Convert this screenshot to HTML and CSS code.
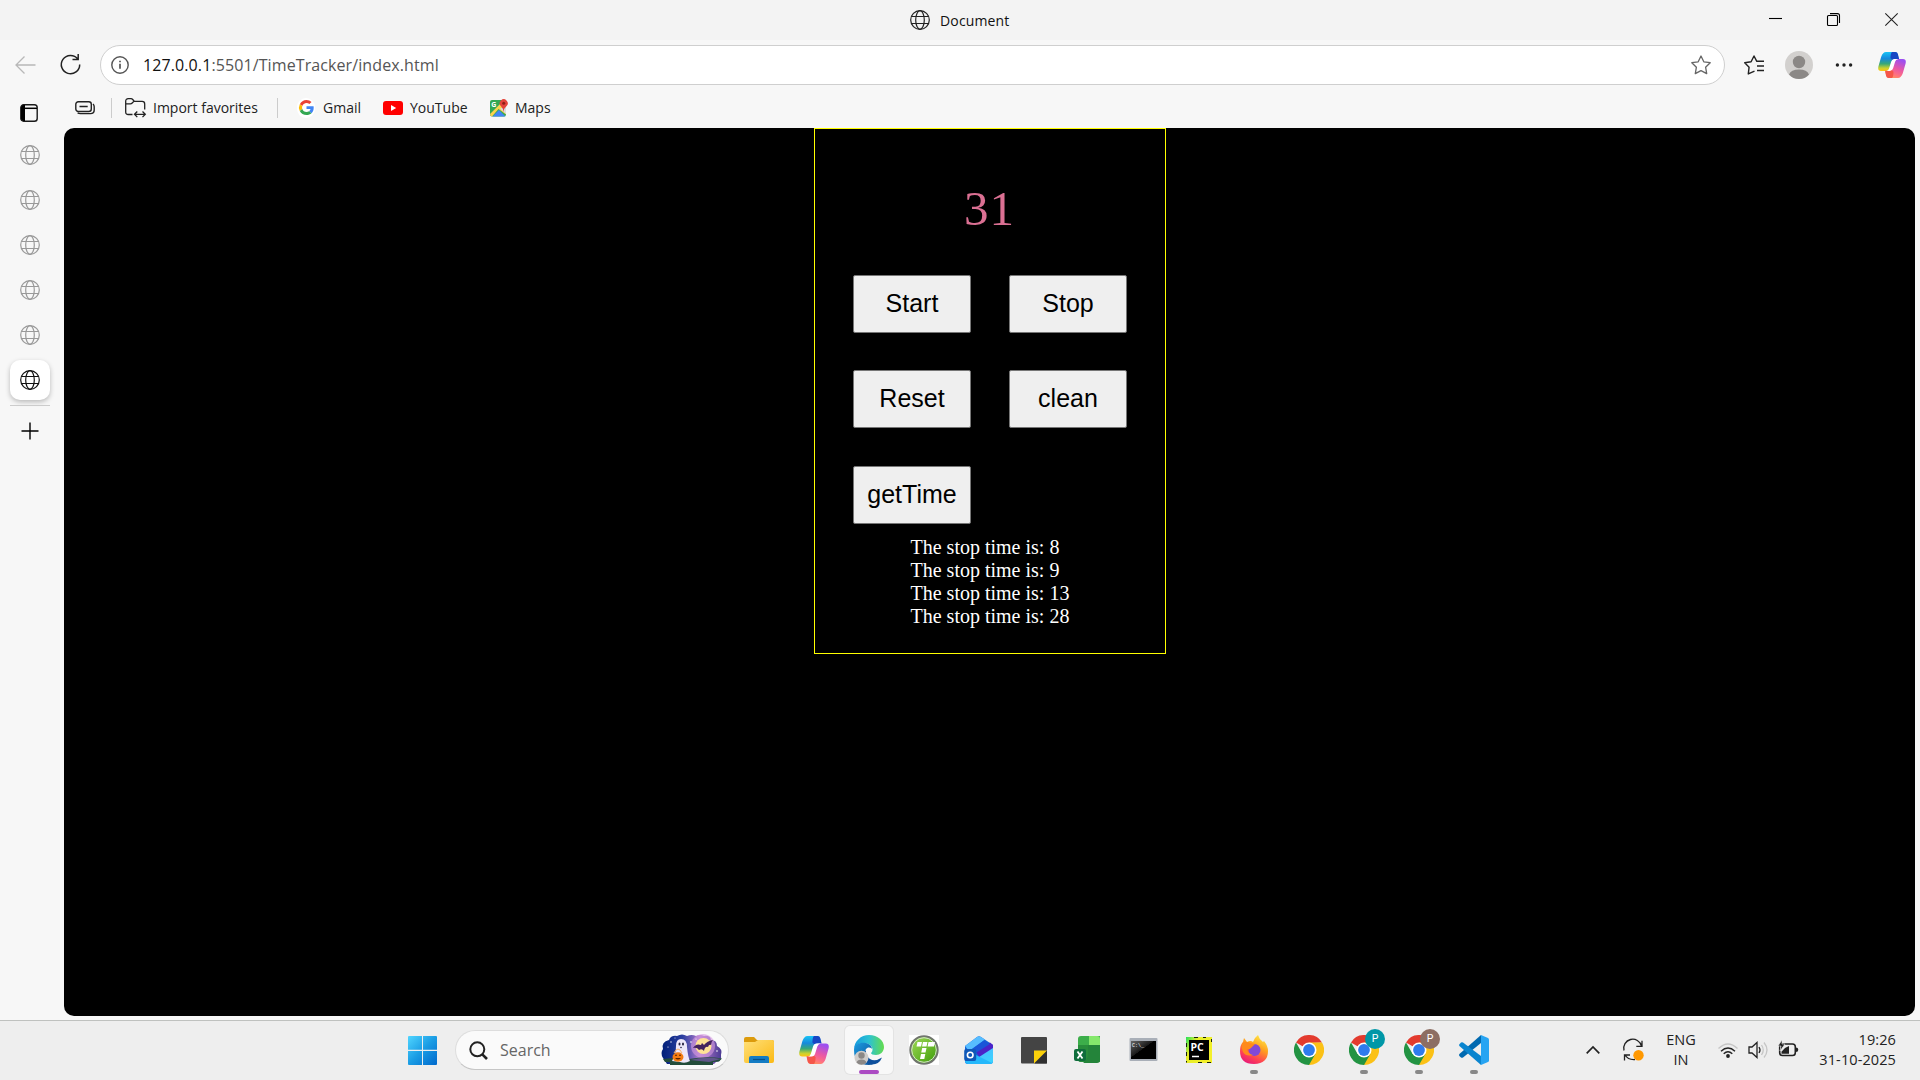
FILE: index.html
```html
<!DOCTYPE html>
<html lang="en">
<head>
<meta charset="utf-8">
<title>Document</title>
<link rel="stylesheet" href="styles.css">
</head>
<body>
<svg class="defs" width="0" height="0">
  <defs>
    <linearGradient id="cpA" x1="0" y1="0" x2="0" y2="1"><stop offset="0" stop-color="#17c3f5"/><stop offset=".35" stop-color="#1689dc"/><stop offset=".62" stop-color="#37a878"/><stop offset=".85" stop-color="#c9d12f"/><stop offset="1" stop-color="#ffc50f"/></linearGradient>
    <linearGradient id="cpB" x1=".6" y1="0" x2=".2" y2="1"><stop offset="0" stop-color="#9d4ff0"/><stop offset=".45" stop-color="#e958a5"/><stop offset=".75" stop-color="#ff7180"/><stop offset="1" stop-color="#ff9a55"/></linearGradient>
    <linearGradient id="win" gradientUnits="userSpaceOnUse" x1="0" y1="0" x2="29" y2="29"><stop offset="0" stop-color="#50d5ff"/><stop offset=".5" stop-color="#1a9ce4"/><stop offset="1" stop-color="#0068cc"/></linearGradient>
    <linearGradient id="fold" x1="0" y1="0" x2="1" y2="1"><stop offset="0" stop-color="#ffe07a"/><stop offset="1" stop-color="#fbb914"/></linearGradient>
    <linearGradient id="edA" x1="0" y1=".5" x2="1" y2=".5"><stop offset="0" stop-color="#159ae0"/><stop offset=".5" stop-color="#2cc2d2"/><stop offset="1" stop-color="#65dc4d"/></linearGradient>
    <linearGradient id="edB" x1="0" y1="0" x2="1" y2="1"><stop offset="0" stop-color="#1b9be0"/><stop offset="1" stop-color="#0b4b94"/></linearGradient>
    <linearGradient id="ffA" x1=".8" y1="0" x2=".3" y2="1"><stop offset="0" stop-color="#fff04a"/><stop offset=".4" stop-color="#ffa01e"/><stop offset=".75" stop-color="#ff4453"/><stop offset="1" stop-color="#e81a78"/></linearGradient>
    <linearGradient id="sky" x1="0" y1="0" x2="1" y2="0"><stop offset="0" stop-color="#001f78"/><stop offset=".35" stop-color="#2b3fa0"/><stop offset=".65" stop-color="#b57bcd"/><stop offset="1" stop-color="#4a3a94"/></linearGradient>
    <linearGradient id="grn" x1="0" y1="0" x2="1" y2="1"><stop offset="0" stop-color="#a4dc58"/><stop offset="1" stop-color="#3a9b08"/></linearGradient>
    <linearGradient id="olk" x1="0" y1="0" x2="1" y2="1"><stop offset="0" stop-color="#55b4ff"/><stop offset="1" stop-color="#38d5ff"/></linearGradient>
    <linearGradient id="cmd" x1="0" y1="0" x2="1" y2="1"><stop offset="0" stop-color="#666"/><stop offset=".45" stop-color="#191919"/><stop offset=".46" stop-color="#000"/></linearGradient>
    <linearGradient id="pyc" x1="0" y1="0" x2="1" y2=".6"><stop offset="0" stop-color="#21e05c"/><stop offset=".35" stop-color="#e5ee28"/><stop offset="1" stop-color="#f4f02a"/></linearGradient>
    <symbol id="globe" viewBox="0 0 20 20"><g fill="none" stroke="currentColor" stroke-width="1.2"><circle cx="10" cy="10" r="9.3"/><ellipse cx="10" cy="10" rx="4.3" ry="9.3"/><path d="M1.3 6.5h17.4M1.3 13.5h17.4"/></g></symbol>
    <symbol id="copilot" viewBox="0 0 28 26">
      <path d="M5.500 .9Q6.300 0 8 0H17q2 0 2.600 2l1 4-6 1.500-3 9Q10.500 19 8 19H3Q-.6 19 .4 14.500L3.200 4.700Q4 2.200 5.500 .9z" fill="url(#cpA)"/>
      <path d="M14 0h3.400q2 0 2.500 2l1.200 5H17q-1.500 0-2.300 1.200L12.500 6Q12.600 1 14 0z" fill="#1746c4"/>
      <path d="M22.500 25.100Q21.700 26 20 26H11q-2 0-2.600-2l-1-4 6-1.500 3-9Q17.500 7 20 7h5q3.600 0 2.600 4.500l-2.800 9.800q-.8 2.500-2.300 3.800z" fill="url(#cpB)"/>
      <path d="M14 26h-3.400q-2 0-2.500-2L7 18.800h4q1.500 0 2.300-1.200l2.200 2.200Q15.400 25 14 26z" fill="#f5564a"/>
      <path d="M16.500 7h3.800q-2.500.4-3.200 2.700l-2 6.600Q14.300 19 11.800 19H8.500q1.900-.3 2.600-2.600l2-6.700Q14 7 16.500 7z" fill="#fff"/>
    </symbol>
    <symbol id="chrome" viewBox="0 0 30 30">
      <path d="M15 15 2 7.500A15 15 0 0 1 28 7.500L15 8z" fill="#e33b2e"/><path d="M15 15V7.500H28A15 15 0 0 1 15 30z" fill="#fbc116"/><path d="M15 30A15 15 0 0 1 2 7.500L8.500 18.700 15 22l6.500-3.300z" fill="#229342"/>
      <circle cx="15" cy="15" r="7.500" fill="#fff"/><circle cx="15" cy="15" r="5.900" fill="#2f7bed"/>
    </symbol>
  </defs>
</svg>

<header class="titlebar">
  <div class="tab-title"><svg width="20" height="20"><use href="#globe"/></svg><span class="t-doc">Document</span></div>
  <div class="window-controls">
    <svg width="13" height="13"><path d="M0 5.500h13" stroke="#000" stroke-width="1.100"/></svg>
    <svg width="13" height="13" fill="none" stroke="#000" stroke-width="1.100"><rect x=".5" y="2.500" width="10" height="10" rx="1"/><path d="M3 .6h7.500q2 0 2 2V10"/></svg>
    <svg width="13" height="13" stroke="#222" stroke-width="1.100"><path d="M.3.3l12.400 12.400M12.700.3.3 12.700"/></svg>
  </div>
</header>

<nav class="toolbar">
  <svg class="back" width="21" height="18" fill="none" stroke="#b8b8b8" stroke-width="1.300"><path d="M20.500 9H1M9.500.5 1 9l8.500 8.500"/></svg>
  <svg class="reload" width="21" height="21" fill="none" stroke="#222" stroke-width="1.500"><path d="M17.800 5A9.200 9.200 0 1 0 19.700 10.500M18.200 0v5.500h-5.700"/></svg>
  <div class="address">
    <svg width="18" height="18" fill="none" stroke="#555" stroke-width="1.400"><circle cx="9" cy="9" r="8.200"/><path d="M9 7.800v5M9 4.700v1.600" stroke-width="1.700"/></svg>
    <span class="t-url"><b>127.0.0.1</b>:5501/TimeTracker/index.html</span>
    <svg class="star" width="20" height="20" fill="none" stroke="#666" stroke-width="1.300" stroke-linejoin="round"><path d="M10 1l2.800 5.800 6.400.9-4.600 4.500 1.100 6.400L10 15.600l-5.700 3 1.100-6.400L.8 7.700l6.400-.9z"/></svg>
  </div>
  <div class="actions">
    <svg width="20" height="20" fill="none" stroke="#222" stroke-width="1.400" stroke-linejoin="round"><path d="M10.500 16.200 4.300 18.900l.8-6.700L.7 7.700l6.400-.9L10 1l2.800 5.300H20M13 11h7M13 15.500h7"/></svg>
    <svg width="28" height="28"><circle cx="14" cy="14" r="14" fill="#d2d0ce"/><circle cx="14" cy="11" r="6.200" fill="#8b8886"/><path d="M4 23.500Q6 18.500 14 18.500t10 5Q20 28 14 28T4 23.500z" fill="#8b8886"/></svg>
    <svg width="18" height="4" fill="#222"><circle cx="2.400" cy="2" r="1.700"/><circle cx="9" cy="2" r="1.700"/><circle cx="15.600" cy="2" r="1.700"/></svg>
    <svg width="28" height="26"><use href="#copilot"/></svg>
  </div>
</nav>

<div class="workspace">
  <aside class="sidebar">
    <svg class="panel-icon" width="18" height="18"><rect x=".8" y=".8" width="16.400" height="16.400" rx="2.800" fill="none" stroke="#1a1a1a" stroke-width="1.400"/><path d="M1 3.500Q1 1 3.500 1H5v16H3.500Q1 17 1 14.500z"/><path d="M1 4.300h16" stroke="#000" stroke-width="1.500"/></svg>
    <div class="tabs">
      <div class="tab"><svg width="20" height="20"><use href="#globe"/></svg></div>
      <div class="tab"><svg width="20" height="20"><use href="#globe"/></svg></div>
      <div class="tab"><svg width="20" height="20"><use href="#globe"/></svg></div>
      <div class="tab"><svg width="20" height="20"><use href="#globe"/></svg></div>
      <div class="tab"><svg width="20" height="20"><use href="#globe"/></svg></div>
      <div class="tab active"><svg width="20" height="20"><use href="#globe"/></svg></div>
    </div>
    <div class="rule"></div>
    <svg class="plus" width="18" height="18" stroke="#000" stroke-width="1.400"><path d="M.5 9h17M9 .5v17"/></svg>
  </aside>

  <div class="main">
    <div class="bookmarks">
      <svg width="20" height="14" fill="none" stroke="#222" stroke-width="1.400"><rect x=".8" y=".8" width="15.500" height="9.700" rx="2.500"/><path d="M4.500 5.500h8.200M18 3q1.200 1 1.200 2.800v3.200q0 3.600-3.800 3.600H5.500Q3.500 12.600 2.600 11.800"/></svg>
      <i class="sep"></i>
      <div class="bm import"><svg width="21" height="20" fill="none" stroke="#222" stroke-width="1.300"><path d="M7.500 16.500H3.300q-2.600 0-2.600-2.600V3.300Q.7.700 3.300.7H6q1 0 1.700.8l1.700 1.900h7.700q2.600 0 2.600 2.600v5.500M.7 5.800h4.600q1.200 0 1.900-.8l1.600-1.600M9.700 16.300h10.400M12.300 13.500l-2.800 2.800 2.800 2.800M17.500 13.500l2.800 2.800-2.800 2.800"/></svg><span>Import favorites</span></div>
      <i class="sep"></i>
      <div class="bm"><span class="chip"><svg width="15" height="15" viewBox="0 0 48 48"><path fill="#ea4335" d="M24 9.500c3.500 0 6.700 1.200 9.200 3.600l6.900-6.900C35.900 2.400 30.500 0 24 0 14.600 0 6.500 5.400 2.600 13.200l8 6.200C12.400 13.700 17.700 9.500 24 9.500z"/><path fill="#4285f4" d="M47 24.600c0-1.600-.2-3.100-.4-4.600H24v9h12.900c-.6 3-2.300 5.500-4.800 7.200l7.700 6C44.400 38 47 32 47 24.600z"/><path fill="#fbbc05" d="M10.500 28.600a14 14 0 0 1 0-9.200l-8-6.200a24 24 0 0 0 0 21.600z"/><path fill="#34a853" d="M24 48c6.500 0 11.900-2.100 15.900-5.800l-7.700-6c-2.200 1.500-4.900 2.300-8.200 2.300-6.300 0-11.600-4.200-13.500-9.900l-8 6.200C6.500 42.600 14.600 48 24 48z"/></svg></span><span>Gmail</span></div>
      <div class="bm yt"><svg width="20" height="14"><rect width="20" height="14" rx="3" fill="#f00"/><path d="M8 4l5.200 3L8 10z" fill="#fff"/></svg><span>YouTube</span></div>
      <div class="bm maps"><svg width="18" height="18"><rect y="1" width="16" height="16.500" rx="2" fill="#34a853"/><path d="M0 15 12 3h4v12.500L8.500 10 2 17.500Q0 17 0 15z" fill="#fbd34b"/><path d="M2.500 17.500 9 11l6.500 6.500z" fill="#4285f4"/><path d="M10 9.500l6 5.500V8z" fill="#d9dde2"/><text x="1.200" y="8" class="mapg">G</text><path d="M13.500 13Q13 9 10.800 7A4 4 0 1 1 16.600 7Q14 9 13.500 13z" fill="#e2443a"/><circle cx="13.700" cy="4.200" r="1.500" fill="#8e1f16"/></svg><span>Maps</span></div>
    </div>

    <main class="page">
      <section class="tracker">
        <div class="count">31</div>
        <div class="buttons">
          <button>Start</button><button>Stop</button><button>Reset</button><button>clean</button><button>getTime</button>
        </div>
        <div class="log"><div>The stop time is: 8</div><div>The stop time is: 9</div><div>The stop time is: 13</div><div>The stop time is: 28</div></div>
      </section>
    </main>
  </div>
</div>

<footer class="taskbar">
  <svg class="start" width="29" height="29" fill="url(#win)"><path d="M1 0h13v13.700H0V1Q0 0 1 0zM15 0h13q1 0 1 1v12.700H15zM0 15h14v14H1q-1 0-1-1zM15 15h14v13q0 1-1 1H15z"/></svg>
  <div class="search">
    <svg width="19" height="19" fill="none" stroke="#222" stroke-width="2"><circle cx="8.300" cy="8.300" r="7"/><path d="M13.300 13.300l4.700 4.700" stroke-width="2.600"/></svg>
    <span class="t-search">Search</span>
    <svg class="scene" width="62" height="32">
      <path d="M2 24Q-1 19 2 15 0 8 8 6q2-5 8-4 5-3 10 0 5-2 9 0 4-2 8 0 6-1 7 4 6 0 6 6 6 3 4 9 1 6-5 7l-2 2H6z" fill="url(#sky)"/>
      <circle cx="42" cy="12" r="12" fill="#d39ae0" opacity=".6"/><circle cx="42.500" cy="12" r="8" fill="#ffe295"/>
      <path d="M2 25Q16 23 28 25q18-3 33-.5l-3 3-6 .5v3H9v-3H4z" fill="#234d3b"/><path d="M29 26q15-4 31-1l-12 3z" fill="#60578a"/>
      <path d="M15 12Q15 5 20 5q6 0 6 8 1 10 3 14-5 3-10 1l-8-1q4-7 4-15z" fill="#eee7fa"/><ellipse cx="18.500" cy="10" rx="1" ry="1.600" fill="#272343"/><ellipse cx="22" cy="10" rx="1" ry="1.600" fill="#272343"/><circle cx="20" cy="13.500" r=".8" fill="#272343"/>
      <path d="M13 19q4-8 8 0" fill="none" stroke="#f8b46b"/><ellipse cx="17" cy="23" rx="5.500" ry="4.700" fill="#f47c13"/><path d="M14 22l1-2 1 2zM18 22l1-2 1 2zM14 24q3 3 6 0z" fill="#5e2500"/>
      <path d="M32 14q3-5 8-3l1-2 2 2q3-4 9-5-2 2-2 5-2-1-3 2-3-1-4 4-2-3-5-1-2-3-6-2z" fill="#43235e"/>
      <g fill="#fff"><circle cx="10" cy="8" r=".7"/><circle cx="7" cy="13" r=".6"/><circle cx="30" cy="8" r=".8"/><circle cx="56" cy="17" r=".8"/><circle cx="14" cy="4" r=".5"/><circle cx="35" cy="5" r=".6"/></g>
    </svg>
  </div>
  <div class="apps">
    <div class="app"><svg width="30" height="30"><path d="M0 4q0-2 2-2h8l3 3h15q2 0 2 2v4H0z" fill="#dc9b0c"/><path d="M0 7h11l3-2h14q2 0 2 2v19q0 2-2 2H2q-2 0-2-2z" fill="url(#fold)"/><path d="M5 28v-5q0-2 2-2h16q2 0 2 2v5z" fill="#147cc4"/><path d="M9 24.500h12" stroke="#07508a" stroke-width="1.200"/></svg></div>
    <div class="app"><svg width="30" height="28"><use href="#copilot"/></svg></div>
    <div class="app current"><svg width="30" height="30"><path d="M0 15C0 6 7 0 15 0c9 0 15 6 15 12 0 5-4 8-8 8-3 0-5-1-5-2 1-1 1.500-2 1.500-3.500C18.500 11 15 8 10 8 5 8 0 11 0 15z" fill="url(#edA)"/><path d="M0 15C0 10 5 7.500 10 7.800c4.500.2 8 3 8 6-4-3-7 0-7 4 0 6 5 10 10 10Q18 30 15 30 0 30 0 15z" fill="url(#edB)"/><path d="M12 15q-1 6 4 9 5 3 12-1.500-3 7.500-11 7-7-2-7-9 0-4 2-5.500z" fill="#0d4f9c"/><circle cx="7.500" cy="22.800" r="7" fill="#cfcdcb"/><circle cx="7.500" cy="20.500" r="3.200" fill="#8b8886"/><path d="M2.500 27.500q1-3 5-3t5 3q-2 2.300-5 2.300t-5-2.300z" fill="#8b8886"/></svg></div>
    <div class="app"><svg width="30" height="30"><rect width="30" height="30" fill="#fff"/><circle cx="15" cy="15" r="13.700" fill="url(#grn)" stroke="#70746e" stroke-width="2"/><circle cx="15" cy="15" r="12.300" fill="none" stroke="#d7e5cb" stroke-width="1"/><g fill="#fff"><path d="M8.500 7H13l-1 4.500H7.500zM14 7h4.500l-1 4.500H13zM19.500 7H26l-1 4.500h-6.500zM13.200 13h4.300l-1 4.500h-4.300zM12 19h4.300l-1 5H11z"/></g></svg></div>
    <div class="app"><svg width="30" height="30"><path d="M1 11 13 2q2-1.500 4 0l12 8v16q0 3-3 3H4q-3 0-3-3z" fill="#1664d8"/><path d="M1 11 13 2q2-1.500 4 0l4 2.500L5 16z" fill="#57bdff"/><path d="M12 17 26 7.500l3 2.500v4L16 23z" fill="#4b23c8"/><path d="M7 15 20 5.500l6 3.500-16 10z" fill="#1a55d8"/><path d="M12 24l17-11v13q0 3-3 3H6z" fill="url(#olk)"/><path d="M12 20l16 8q-1 1-2 1H4q-3 0-3-3z" fill="#25b8fb"/><rect x=".2" y="14" width="12" height="12" rx="2" fill="#0f58b8"/><circle cx="6.200" cy="20" r="2.800" fill="none" stroke="#fff" stroke-width="1.600"/></svg></div>
    <div class="app"><svg width="30" height="30"><rect x="2" y="2" width="26" height="26.500" rx="1" fill="#444"/><path d="M15 15.500h13L15 28.500z" fill="#fbd10a"/><path d="M28 16v12.500H15.500z" fill="#303030"/></svg></div>
    <div class="app"><svg width="30" height="30"><path d="M4 4q0-3 3-3h19v26H7q-3 0-3-3z" fill="#3cae4a"/><path d="M15 1h8q3 0 3 3v6H15z" fill="#85e86c"/><path d="M4 10h11v17H7q-3 0-3-3z" fill="#288d3b"/><path d="M14 10h12v15q0 3-3 3H9q5-3 5-9z" fill="#24843a"/><rect y="14" width="12" height="12" rx="2" fill="#0f6d3c"/><path d="M3.500 16.500l5 7M8.500 16.500l-5 7" stroke="#fff" stroke-width="1.800"/></svg></div>
    <div class="app"><svg width="30" height="30"><rect x=".5" y="3" width="28" height="23" rx="1" fill="#a9afb8"/><rect x="2" y="6" width="25" height="18" fill="url(#cmd)"/><text x="3" y="11.500" class="cmdt">C:\_</text></svg></div>
    <div class="app"><svg width="30" height="30"><rect x="2" y="2" width="26" height="26" fill="url(#pyc)"/><path d="M2.500 8v19.500M10 2.500h12M14 27.500h13.500M27.500 4v3" fill="none" stroke="#17200b" stroke-dasharray="4 5"/><rect x="5" y="5" width="20" height="20" fill="#000"/><text x="6.500" y="15.500" class="pct">PC</text><path d="M8 21.500h7" stroke="#fff" stroke-width="1.500"/></svg></div>
    <div class="app running"><svg width="30" height="30"><path d="M1 16Q1 10 4 7l1-4 3 4q4-2 6 0 1-4 5-7 1 4 5 7l1-1q4 5 4 10 0 12.500-14 13Q1 29 1 16z" fill="url(#ffA)"/><circle cx="15.500" cy="15" r="6" fill="#8149d9"/><path d="M3 8q5-2 8 0l5 1-4 4q-2 2-4 1 1 5 6 6-7 2-10-3Q2 13 3 8z" fill="#ff8a1c"/></svg></div>
    <div class="app"><svg width="30" height="30"><use href="#chrome"/></svg></div>
    <div class="app running"><svg width="30" height="30"><use href="#chrome"/></svg><span class="badge teal">P</span></div>
    <div class="app running"><svg width="30" height="30"><use href="#chrome"/></svg><span class="badge brown">P</span></div>
    <div class="app running"><svg width="30" height="30"><path d="M22 0v8L4 22.500q-1 .5-2 0l-1.600-1.600q-.8-1 0-2z" fill="#0069b0"/><path d="M.4 11Q-.3 10 .4 9.200L2 7.600q1-.6 2 0L22 21v9z" fill="#0a85cf"/><path d="M22 0l7 3q1 .5 1 1.500v21q0 1-1 1.500l-7 3z" fill="#27a4f2"/></svg></div>
  </div>
  <div class="tray">
    <svg class="chev" width="14" height="8" fill="none" stroke="#222" stroke-width="1.700"><path d="M.7 7.300 7 1l6.300 6.300"/></svg>
    <svg class="sync" width="21" height="21" fill="none" stroke="#222" stroke-width="1.300"><path d="M1 10.500A9 9 0 0 1 18.500 6M19 .8v5.500h-5.700M12 19.500Q5 20 2 15M1.500 20.500V15H7"/><circle cx="15.500" cy="15.300" r="5.200" fill="#ff9800" stroke="none"/></svg>
    <div class="lang"><span>ENG</span><span>IN</span></div>
    <svg class="wifi" width="20" height="15" fill="none" stroke="#222" stroke-width="1.400"><path d="M.5 5.500Q10-3.500 19.500 5.500" stroke="#c6c6c6"/><path d="M3 8.200q7-6.500 14 0M5.700 10.800q4.300-4 8.600 0"/><circle cx="10" cy="13" r="1.900" fill="#222" stroke="none"/></svg>
    <svg class="vol" width="21" height="18" fill="none" stroke="#222" stroke-width="1.300"><path d="M1 6h3l5-4.500v15L4 12H1zM11 6q2 3 0 6"/><path d="M13.500 4q3.500 5 0 10M16 1.500q6 7.500 0 15" stroke="#c6c6c6"/></svg>
    <svg class="bat" width="21" height="17"><rect x="1.700" y="4" width="15.600" height="11.500" rx="2.800" fill="none" stroke="#222" stroke-width="1.600"/><path d="M17.800 7.500q2.500 0 2.500 2.300t-2.500 2.300z" fill="#222"/><path d="M3.500 13.800v-2L7 8l4-2v7.800z" fill="#222"/><path d="M4 0 0 6h3l-1 5 5-7H4z" fill="#222" stroke="#eee" stroke-width=".6"/></svg>
    <div class="clock"><span>19:26</span><span>31-10-2025</span></div>
  </div>
</footer>
</body>
</html>
```

FILE: styles.css
```css
* { box-sizing: border-box; }
html, body { height: 100%; }
body {
  margin: 0;
  display: flex;
  flex-direction: column;
  overflow: hidden;
  background: #f7f7f7;
  color: #222;
  font: 14px/20px "Open Sans", "Noto Sans", sans-serif;
}
svg { display: block; flex: none; overflow: visible; }
span { white-space: nowrap; }
.defs { position: absolute; }

.titlebar { flex: none; height: 40px; background: #f3f3f3; display: flex; justify-content: flex-end; padding-left: 910px; padding-right: 22px; }
.tab-title { display: flex; align-items: center; gap: 10px; margin-right: auto; }
.t-doc { letter-spacing: .15px; padding-top: 1px; color: #111; }
.window-controls { display: flex; gap: 45px; padding-top: 13px; }

.toolbar { flex: none; height: 49px; display: flex; align-items: center; padding: 0 13px 0 15px; }
.reload { margin-left: 24px; }
.address {
  width: 1625px; height: 40px; margin-left: 19px; padding: 0 13px 0 10px;
  display: flex; align-items: center;
  background: #fff; border: 1px solid #cfcfcf; border-radius: 20px;
}
.t-url { margin-left: 14px; font-size: 16px; letter-spacing: .1px; color: #555; }
.t-url b { font-weight: 400; color: #111; }
.star { margin-left: auto; }
.actions { display: flex; align-items: center; margin-left: 19px; }
.actions svg:nth-child(2) { margin-left: 21px; }
.actions svg:nth-child(3) { margin-left: 22px; }
.actions svg:nth-child(4) { margin-left: 25px; }

.workspace { flex: 1; min-height: 0; display: flex; }
.sidebar { width: 64px; padding-right: 4px; display: flex; flex-direction: column; align-items: center; padding-top: 15px; }
.panel-icon { margin-right: 2px; }
.plus { margin-right: 1px; }
.tabs { display: flex; flex-direction: column; gap: 5px; margin-top: 13px; color: #999; }
.tab { width: 40px; height: 40px; border-radius: 10px; display: flex; align-items: center; justify-content: center; }
.tab.active { background: #fff; color: #111; box-shadow: 0 2px 5px rgba(0, 0, 0, .25); }
.rule { width: 40px; height: 1px; background: #ccc; margin: 5px 0 16px; }

.main { flex: 1; display: flex; flex-direction: column; padding-right: 5px; padding-bottom: 4px; }
.bookmarks { flex: none; height: 39px; display: flex; align-items: center; padding: 0 0 2px 11px; }
.sep { width: 1px; height: 20px; background: #ccc; margin-left: 16px; }
.bm { display: flex; align-items: center; gap: 7px; }
.import { width: 133px; margin-left: 13px; }
.import + .sep { margin-left: 19px; }
.import + .sep + .bm { margin-left: 19px; width: 83px; gap: 8px; }
.chip { width: 18px; height: 20px; border-radius: 9px; background: #fff; display: flex; align-items: center; justify-content: center; }
.yt { width: 84px; margin-left: 3px; }
.maps { margin-left: 23px; }
.mapg { font: bold 7px "Open Sans", sans-serif; fill: #fff; }

.page { flex: 1; background: #000; border-radius: 10px; display: flex; justify-content: center; align-items: flex-start; }
.tracker { width: 352px; height: 526px; border: 1px solid #ff0; color: #fff; font: 20px/23px "Liberation Serif", serif; }
.count { margin-top: 51px; height: 57px; line-height: 57px; font-size: 49px; letter-spacing: 1px; color: #db7093; text-align: center; }
.buttons { display: grid; grid-template-columns: 118px 118px; grid-template-rows: 58px 58px 58px; column-gap: 38px; row-gap: 37.400px; margin: 38px 0 0 38px; }
.buttons button { padding: 0 0 1px 1px; border: 1px solid #767676; border-radius: 2px; background: #efefef; color: #000; font: 25px "Liberation Sans", sans-serif; }
.log { margin: 12.500px 0 0 96px; }

.taskbar { flex: none; height: 60px; background: #eee; border-top: 1px solid #bfc1bf; display: flex; align-items: center; padding: 0 24px 1px 408px; }
.search { width: 274px; height: 40px; margin-left: 18px; padding-left: 13px; display: flex; align-items: center; border-radius: 20px; background: #fafafa; border: 1px solid #ddd; border-bottom-color: #c6c6c6; }
.t-search { margin-left: 12px; font-size: 16px; color: #666; }
.scene { margin-left: auto; margin-right: 5px; }
.apps { display: flex; gap: 7px; margin-left: 6px; }
.app { position: relative; width: 48px; height: 48px; border-radius: 5px; display: flex; align-items: center; justify-content: center; }
.current { background: #f8f8f8; box-shadow: 0 0 0 1px #e3e3e3; }
.current::after, .running::after { content: ""; position: absolute; bottom: 0; left: 20px; width: 8px; height: 4px; border-radius: 2px; background: #888; }
.current::after { left: 14px; width: 20px; background: #ac4bc3; }
.badge { position: absolute; left: 25px; top: 3px; width: 20px; height: 20px; border-radius: 50%; color: #fff; font: 10.500px/20px Roboto, sans-serif; text-align: center; }
.teal { background: #0097a7; }
.brown { background: #8d6e63; }
.cmdt { font: 5px "Liberation Mono", monospace; fill: #fff; }
.pct { font: bold 10.500px "Open Sans", sans-serif; fill: #fff; }

.tray { display: flex; align-items: center; margin-left: auto; }
.sync { margin-left: 23px; }
.lang { width: 50px; margin-left: 12px; display: flex; flex-direction: column; text-align: center; font-size: 14.500px; }
.wifi { margin-left: 12px; }
.vol { margin-left: 10px; }
.bat { margin-left: 9px; margin-top: -3px; }
.clock { width: 97px; display: flex; flex-direction: column; text-align: right; font-size: 14.500px; letter-spacing: .1px; }
```
